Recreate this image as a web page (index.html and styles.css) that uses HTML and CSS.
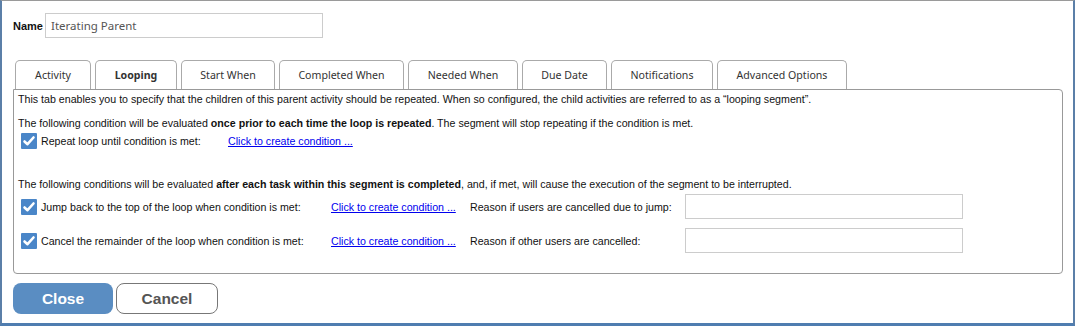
FILE: index.html
```html
<!DOCTYPE html>
<html lang="en">
<head>
    <meta charset="UTF-8">
    <title>Iterating Parent - Looping</title>
    <link rel="stylesheet" href="styles.css">
</head>
<body>
    <div class="frame">

        <!-- Name -->
        <div class="name-row">
            <label class="name-label">Name</label>
            <input class="name-input" type="text" value="Iterating Parent">
        </div>

        <!-- Tabs -->
        <div class="tabs">
            <div class="tab w-activity">Activity</div>
            <div class="tab active w-looping">Looping</div>
            <div class="tab w-start">Start When</div>
            <div class="tab w-completed">Completed When</div>
            <div class="tab w-needed">Needed When</div>
            <div class="tab w-due">Due Date</div>
            <div class="tab w-notif">Notifications</div>
            <div class="tab w-advanced">Advanced Options</div>
        </div>

        <div class="panel">
            <p class="intro">This tab enables you to specify that the children of this parent activity should be repeated. When so configured, the child activities are referred to as a &ldquo;looping segment&rdquo;.</p>
            <p class="note">The following condition will be evaluated <b>once prior to each time the loop is repeated</b>. The segment will stop repeating if the condition is met.</p>
            <div class="row row-repeat">
                <span class="check"><svg width="16" height="16" viewBox="0 0 16 16"><path d="M3.5 8.5 L6.5 11.2 L12.5 4.5" fill="none" stroke="#fff" stroke-width="2.6" stroke-linecap="round" stroke-linejoin="round"/></svg></span>
                <span class="label short">Repeat loop until condition is met:</span>
                <a href="#" class="link">Click to create condition ...</a>
            </div>

            <p class="note after">The following conditions will be evaluated <b>after each task within this segment is completed</b>, and, if met, will cause the execution of the segment to be interrupted.</p>
            <div class="row row-jump">
                <span class="check"><svg width="16" height="16" viewBox="0 0 16 16"><path d="M3.5 8.5 L6.5 11.2 L12.5 4.5" fill="none" stroke="#fff" stroke-width="2.6" stroke-linecap="round" stroke-linejoin="round"/></svg></span>
                <span class="label long">Jump back to the top of the loop when condition is met:</span>
                <a href="#" class="link fixed">Click to create condition ...</a>
                <span class="reason">Reason if users are cancelled due to jump:</span>
                <input class="reason-input" type="text">
            </div>
            <div class="row row-cancel">
                <span class="check"><svg width="16" height="16" viewBox="0 0 16 16"><path d="M3.5 8.5 L6.5 11.2 L12.5 4.5" fill="none" stroke="#fff" stroke-width="2.6" stroke-linecap="round" stroke-linejoin="round"/></svg></span>
                <span class="label long">Cancel the remainder of the loop when condition is met:</span>
                <a href="#" class="link fixed">Click to create condition ...</a>
                <span class="reason">Reason if other users are cancelled:</span>
                <input class="reason-input" type="text">
            </div>
        </div>

        <div class="buttons">
            <button class="btn btn-close">Close</button>
            <button class="btn btn-cancel">Cancel</button>
        </div>
    </div>
</body>
</html>
```

FILE: styles.css
```css
* {
    margin: 0;
    padding: 0;
    box-sizing: border-box;
}
html, body {
    width: 1075px;
    height: 326px;
    background: #fff;
    overflow: hidden;
}
.frame {
    width: 1075px;
    height: 326px;
    border-top: 1px solid #9a9a9a;
    border-left: 2px solid #5b7fa8;
    border-right: 2px solid #5b7fa8;
    border-bottom: 3px solid #4f7db0;
    padding: 12px 11px 0 11px;
    font-family: "Liberation Sans", Arial, sans-serif;
    font-size: 10.65px;
    color: #111;
}
/* Name */
.name-row {
    display: flex;
    align-items: center;
    height: 25px;
}
.name-label {
    font-weight: bold;
    font-size: 11px;
    width: 32px;
}
.name-input {
    width: 278px;
    height: 25px;
    border: 1px solid #ccc;
    padding: 0 5px;
    font-family: "Noto Sans", sans-serif;
    font-size: 11.5px;
    color: #555;
    outline: none;
}
/* Tabs */
.tabs {
    display: flex;
    gap: 4px;
    margin-top: 22px;
    padding-left: 2px;
    height: 29px;
}
.tab {
    height: 29px;
    border: 1px solid #aaa;
    border-bottom: none;
    border-radius: 5px 5px 0 0;
    text-align: center;
    padding-top: 7px;
    font-family: "Noto Sans", sans-serif;
    font-size: 10.6px;
    color: #333;
}
.tab.active {
    font-weight: bold;
}
.w-activity { width: 76px; }
.w-looping { width: 82px; }
.w-start { width: 94px; }
.w-completed { width: 125px; }
.w-needed { width: 110px; }
.w-due { width: 85px; }
.w-notif { width: 102px; }
.w-advanced { width: 130px; }
/* Panel */
.panel {
    width: 1050px;
    height: 185px;
    border: 1px solid #999;
    border-radius: 0 4px 4px 4px;
    padding: 0 4px;
}
.panel p {
    line-height: 14px;
}
.intro {
    margin-top: 2px;
}
.note {
    margin-top: 10px;
}
.note.after {
    margin-top: 26px;
}
.row {
    display: flex;
    align-items: center;
}
.row-repeat {
    height: 20px;
    margin-top: 1px;
}
.row-jump {
    height: 25px;
    margin-top: 3px;
}
.row-cancel {
    height: 25px;
    margin-top: 9px;
}
.check {
    width: 16px;
    height: 16px;
    background: #4a86c8;
    border-radius: 1px;
    margin-left: 3px;
    margin-right: 4px;
    display: flex;
}
.label.short { width: 187px; }
.label.long { width: 290px; }
.link {
    color: #0000ee;
    text-decoration: underline;
}
.link.fixed {
    width: 139px;
}
.reason {
    width: 215px;
}
.reason-input {
    width: 278px;
    height: 25px;
    border: 1px solid #ccc;
    outline: none;
}
/* Buttons */
.buttons {
    display: flex;
    gap: 3px;
    margin-top: 9px;
}
.btn {
    height: 31px;
    border-radius: 8px;
    font-family: "Liberation Sans", Arial, sans-serif;
    font-size: 15.5px;
    font-weight: bold;
    cursor: pointer;
}
.btn-close {
    width: 100px;
    background: #5a8dc2;
    color: #fff;
    border: none;
}
.btn-cancel {
    width: 102px;
    background: #fff;
    color: #555;
    border: 1px solid #777;
}
```
